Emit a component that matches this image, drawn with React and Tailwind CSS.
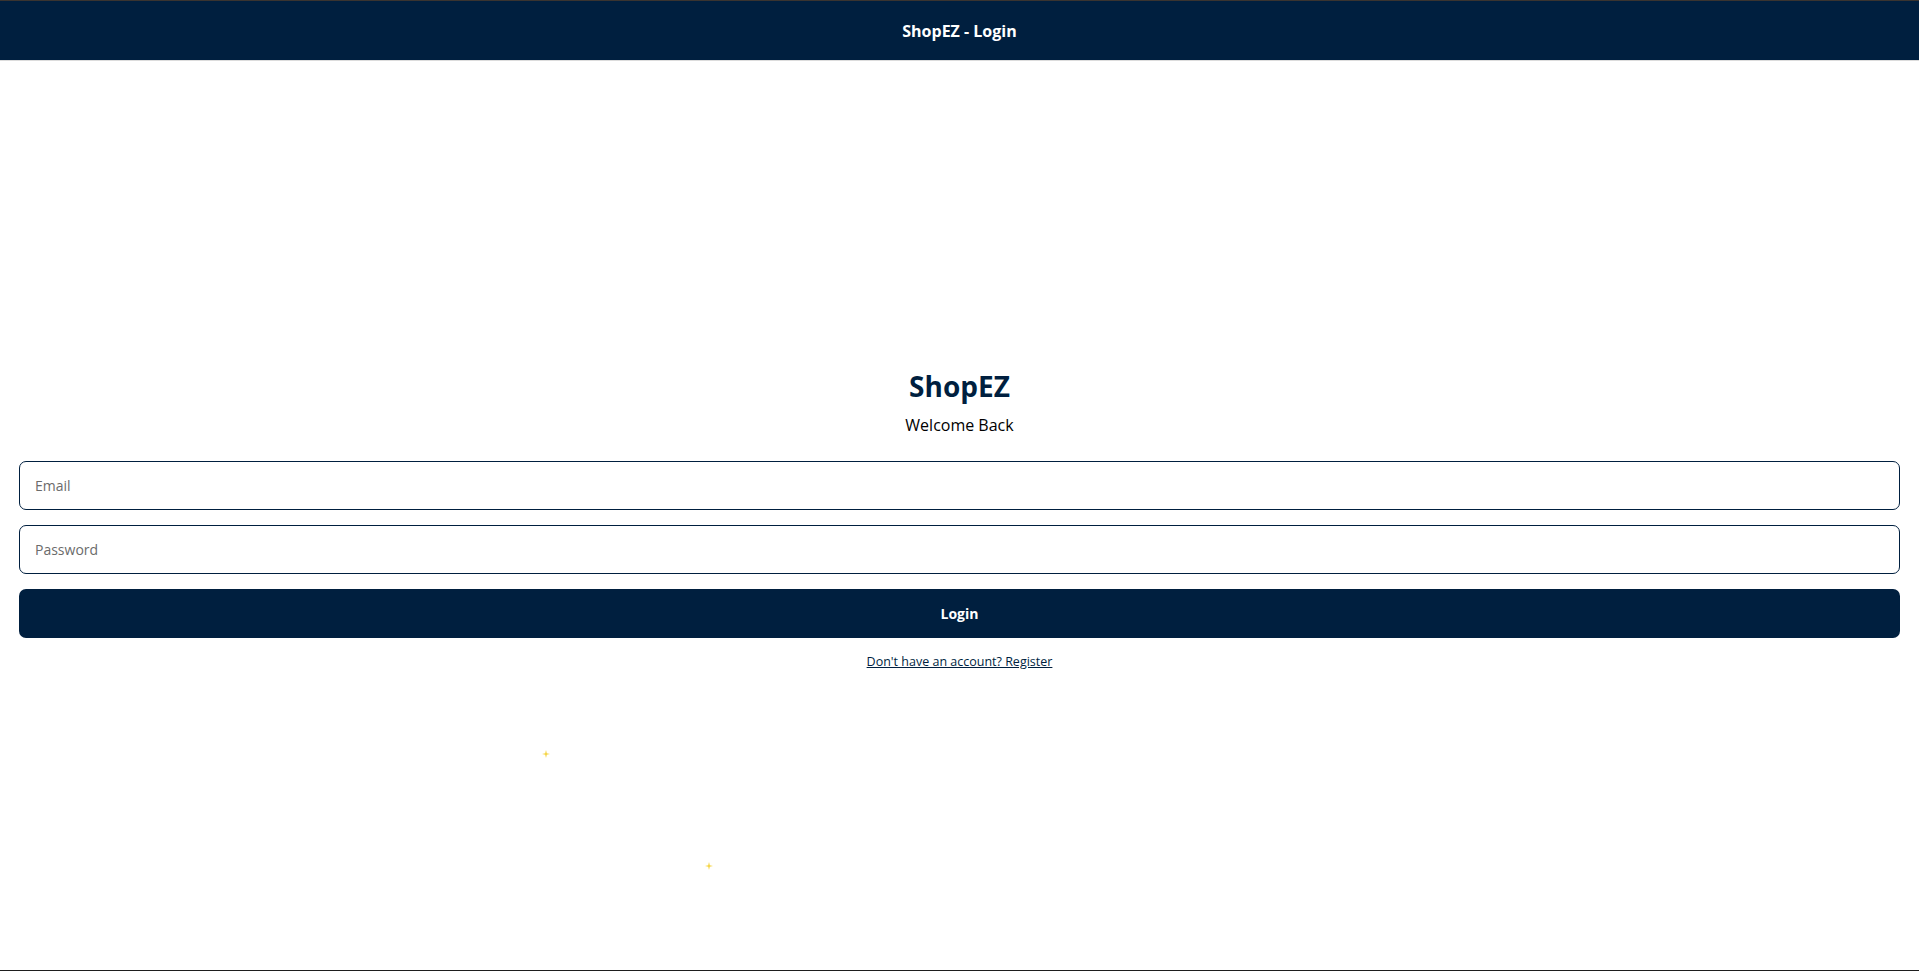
import React from 'react';

const Sparkle = ({ className }) => (
  <svg className={className} width="8" height="8" viewBox="0 0 8 8">
    <path d="M4 0 L4.8 3.2 L8 4 L4.8 4.8 L4 8 L3.2 4.8 L0 4 L3.2 3.2 Z" fill="#f5d442" />
  </svg>
);

export default function App() {
  return (
    <div className="relative flex h-[971px] flex-col bg-white font-['Open_Sans',sans-serif]">
      {/* Navbar */}
      <header className="flex h-[61px] shrink-0 items-center justify-center border-t border-b border-t-[#3a3430] border-b-[#dcdcdc] bg-[#001f3f]">
        <h1 className="text-[16px] font-bold text-white">ShopEZ - Login</h1>
      </header>

      {/* Login form */}
      <main className="flex flex-1 flex-col justify-center px-[19px] pt-[8px]">
        <div className="text-center">
          <h2 className="text-[28px] font-bold leading-[34px] text-[#001f3f]">ShopEZ</h2>
          <p className="mt-[12px] text-[16px] leading-[20px] text-black">Welcome Back</p>
        </div>

        <form className="mt-[26px] flex flex-col gap-[15px]" onSubmit={(e) => e.preventDefault()}>
          <input
            type="email"
            placeholder="Email"
            className="h-[49px] w-full rounded-[7px] border border-[#001f3f] px-[15px] text-[14px] text-black outline-none placeholder:text-[#6b6b6b]"
          />
          <input
            type="password"
            placeholder="Password"
            className="h-[49px] w-full rounded-[7px] border border-[#001f3f] px-[15px] text-[14px] text-black outline-none placeholder:text-[#6b6b6b]"
          />
          <button
            type="submit"
            className="h-[49px] w-full rounded-[7px] bg-[#001f3f] text-[14px] font-bold text-white"
          >
            Login
          </button>
        </form>

        <div className="mt-[13px] text-center leading-[18px]">
          <a href="#" className="text-[12.5px] text-[#001f3f] underline">
            Don't have an account? Register
          </a>
        </div>
      </main>

      <div className="h-px shrink-0 bg-[#1e1e1e]" />

      {/* cursor sparkles */}
      <Sparkle className="absolute left-[542px] top-[750px]" />
      <Sparkle className="absolute left-[705px] top-[862px]" />
    </div>
  );
}
